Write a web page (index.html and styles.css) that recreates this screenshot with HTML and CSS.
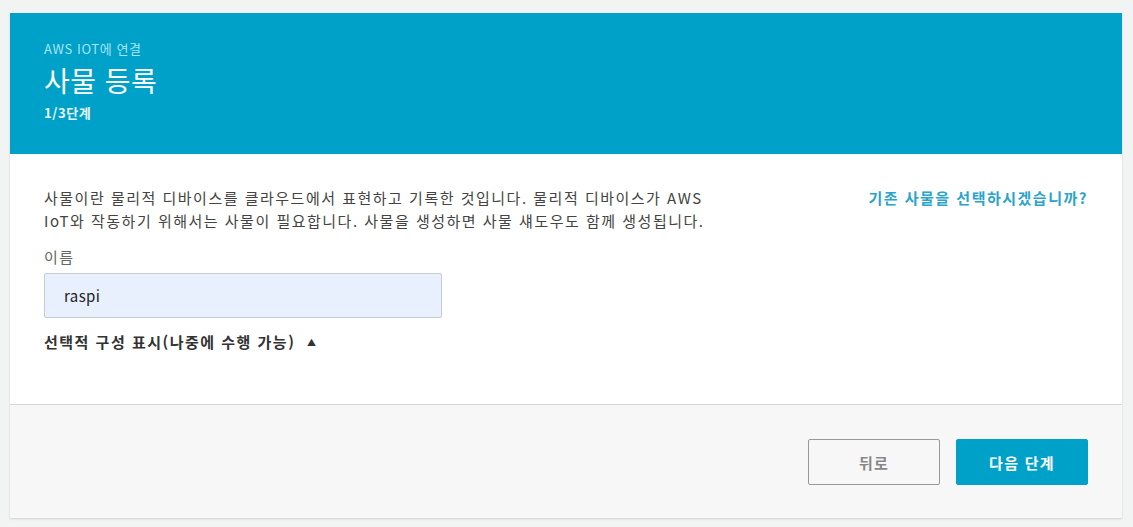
FILE: index.html
```html
<!DOCTYPE html>
<html lang="ko">
<head>
    <meta charset="UTF-8">
    <meta name="viewport" content="width=device-width, initial-scale=1.0">
    <title>사물 등록</title>
    <link rel="stylesheet" href="styles.css">
</head>
<body>
    <div class="wizard">
        <header class="wizard-header">
            <p class="crumb">AWS IOT에 연결</p>
            <h1>사물 등록</h1>
            <p class="step">1/3단계</p>
        </header>

        <div class="wizard-body">
            <div class="intro">
                <p class="desc">사물이란 물리적 디바이스를 클라우드에서 표현하고 기록한 것입니다. 물리적 디바이스가 AWS IoT와 작동하기 위해서는 사물이 필요합니다. 사물을 생성하면 사물 섀도우도 함께 생성됩니다.</p>
                <a href="#" class="existing">기존 사물을 선택하시겠습니까?</a>
            </div>

            <label for="name" class="field-label">이름</label>
            <input type="text" id="name" class="name-input" value="raspi">

            <div class="optional">선택적 구성 표시(나중에 수행 가능) <span class="caret">&#9650;</span></div>
        </div>

        <footer class="wizard-footer">
            <button class="btn btn-back">뒤로</button>
            <button class="btn btn-next">다음 단계</button>
        </footer>
    </div>
</body>
</html>
```

FILE: styles.css
```css
body {
    margin: 0;
    padding: 13px 11px 10px 10px;
    background-color: #f2f3f3;
    font-family: "Noto Sans CJK KR", "Noto Sans", sans-serif;
    color: #444;
}
.wizard {
    background-color: #fff;
    box-shadow: 0 1px 2px rgba(0, 0, 0, 0.15);
}
.wizard-header {
    background-color: #00a1c9;
    color: #fff;
    padding: 27px 34px 0 34px;
    height: 114px;
}
.crumb {
    margin: 0;
    font-size: 13px;
    letter-spacing: 0.6px;
    line-height: 18px;
    color: #a6e4f3;
}
.wizard-header h1 {
    margin: 4px 0 0 0;
    font-size: 28px;
    font-weight: normal;
    letter-spacing: 0.5px;
    line-height: 36px;
}
.step {
    margin: 6px 0 0 0;
    font-size: 13px;
    font-weight: bold;
    letter-spacing: 0.6px;
    line-height: 18px;
    color: #e6f6fa;
}
.wizard-body {
    padding: 32px 34px 0 34px;
    height: 218px;
    border-bottom: 1px solid #d5d5d5;
}
.intro {
    display: flex;
    justify-content: space-between;
    align-items: flex-start;
}
.desc {
    margin: 0;
    max-width: 680px;
    font-size: 15px;
    letter-spacing: 1.5px;
    line-height: 23px;
}
.existing {
    color: #2aa4cb;
    font-size: 15px;
    font-weight: bold;
    letter-spacing: 1.5px;
    text-decoration: none;
    line-height: 23px;
}
.field-label {
    display: block;
    margin-top: 15px;
    font-size: 15px;
    letter-spacing: 1.5px;
    line-height: 20px;
    color: #666;
}
.name-input {
    display: block;
    box-sizing: border-box;
    width: 398px;
    height: 45px;
    margin-top: 6px;
    padding: 0 19px;
    border: 1px solid #c8cbd0;
    border-radius: 2px;
    background-color: #e8f0fe;
    font-family: inherit;
    font-size: 15px;
    letter-spacing: 0.4px;
    color: #222;
}
.optional {
    margin-top: 14px;
    font-size: 15px;
    font-weight: bold;
    letter-spacing: 1.5px;
    line-height: 20px;
    color: #333;
}
.caret {
    font-size: 9px;
    margin-left: 6px;
    vertical-align: 2px;
}
.wizard-footer {
    background-color: #f7f7f7;
    display: flex;
    justify-content: flex-end;
    gap: 16px;
    padding: 34px 34px 33px 0;
}
.btn {
    width: 132px;
    height: 46px;
    border-radius: 2px;
    font-family: inherit;
    font-size: 15px;
    font-weight: bold;
    letter-spacing: 1.3px;
    cursor: pointer;
}
.btn-back {
    background-color: #f7f7f7;
    border: 1px solid #999;
    color: #888;
}
.btn-next {
    background-color: #00a1c9;
    border: 1px solid #00a1c9;
    color: #fff;
}
```
